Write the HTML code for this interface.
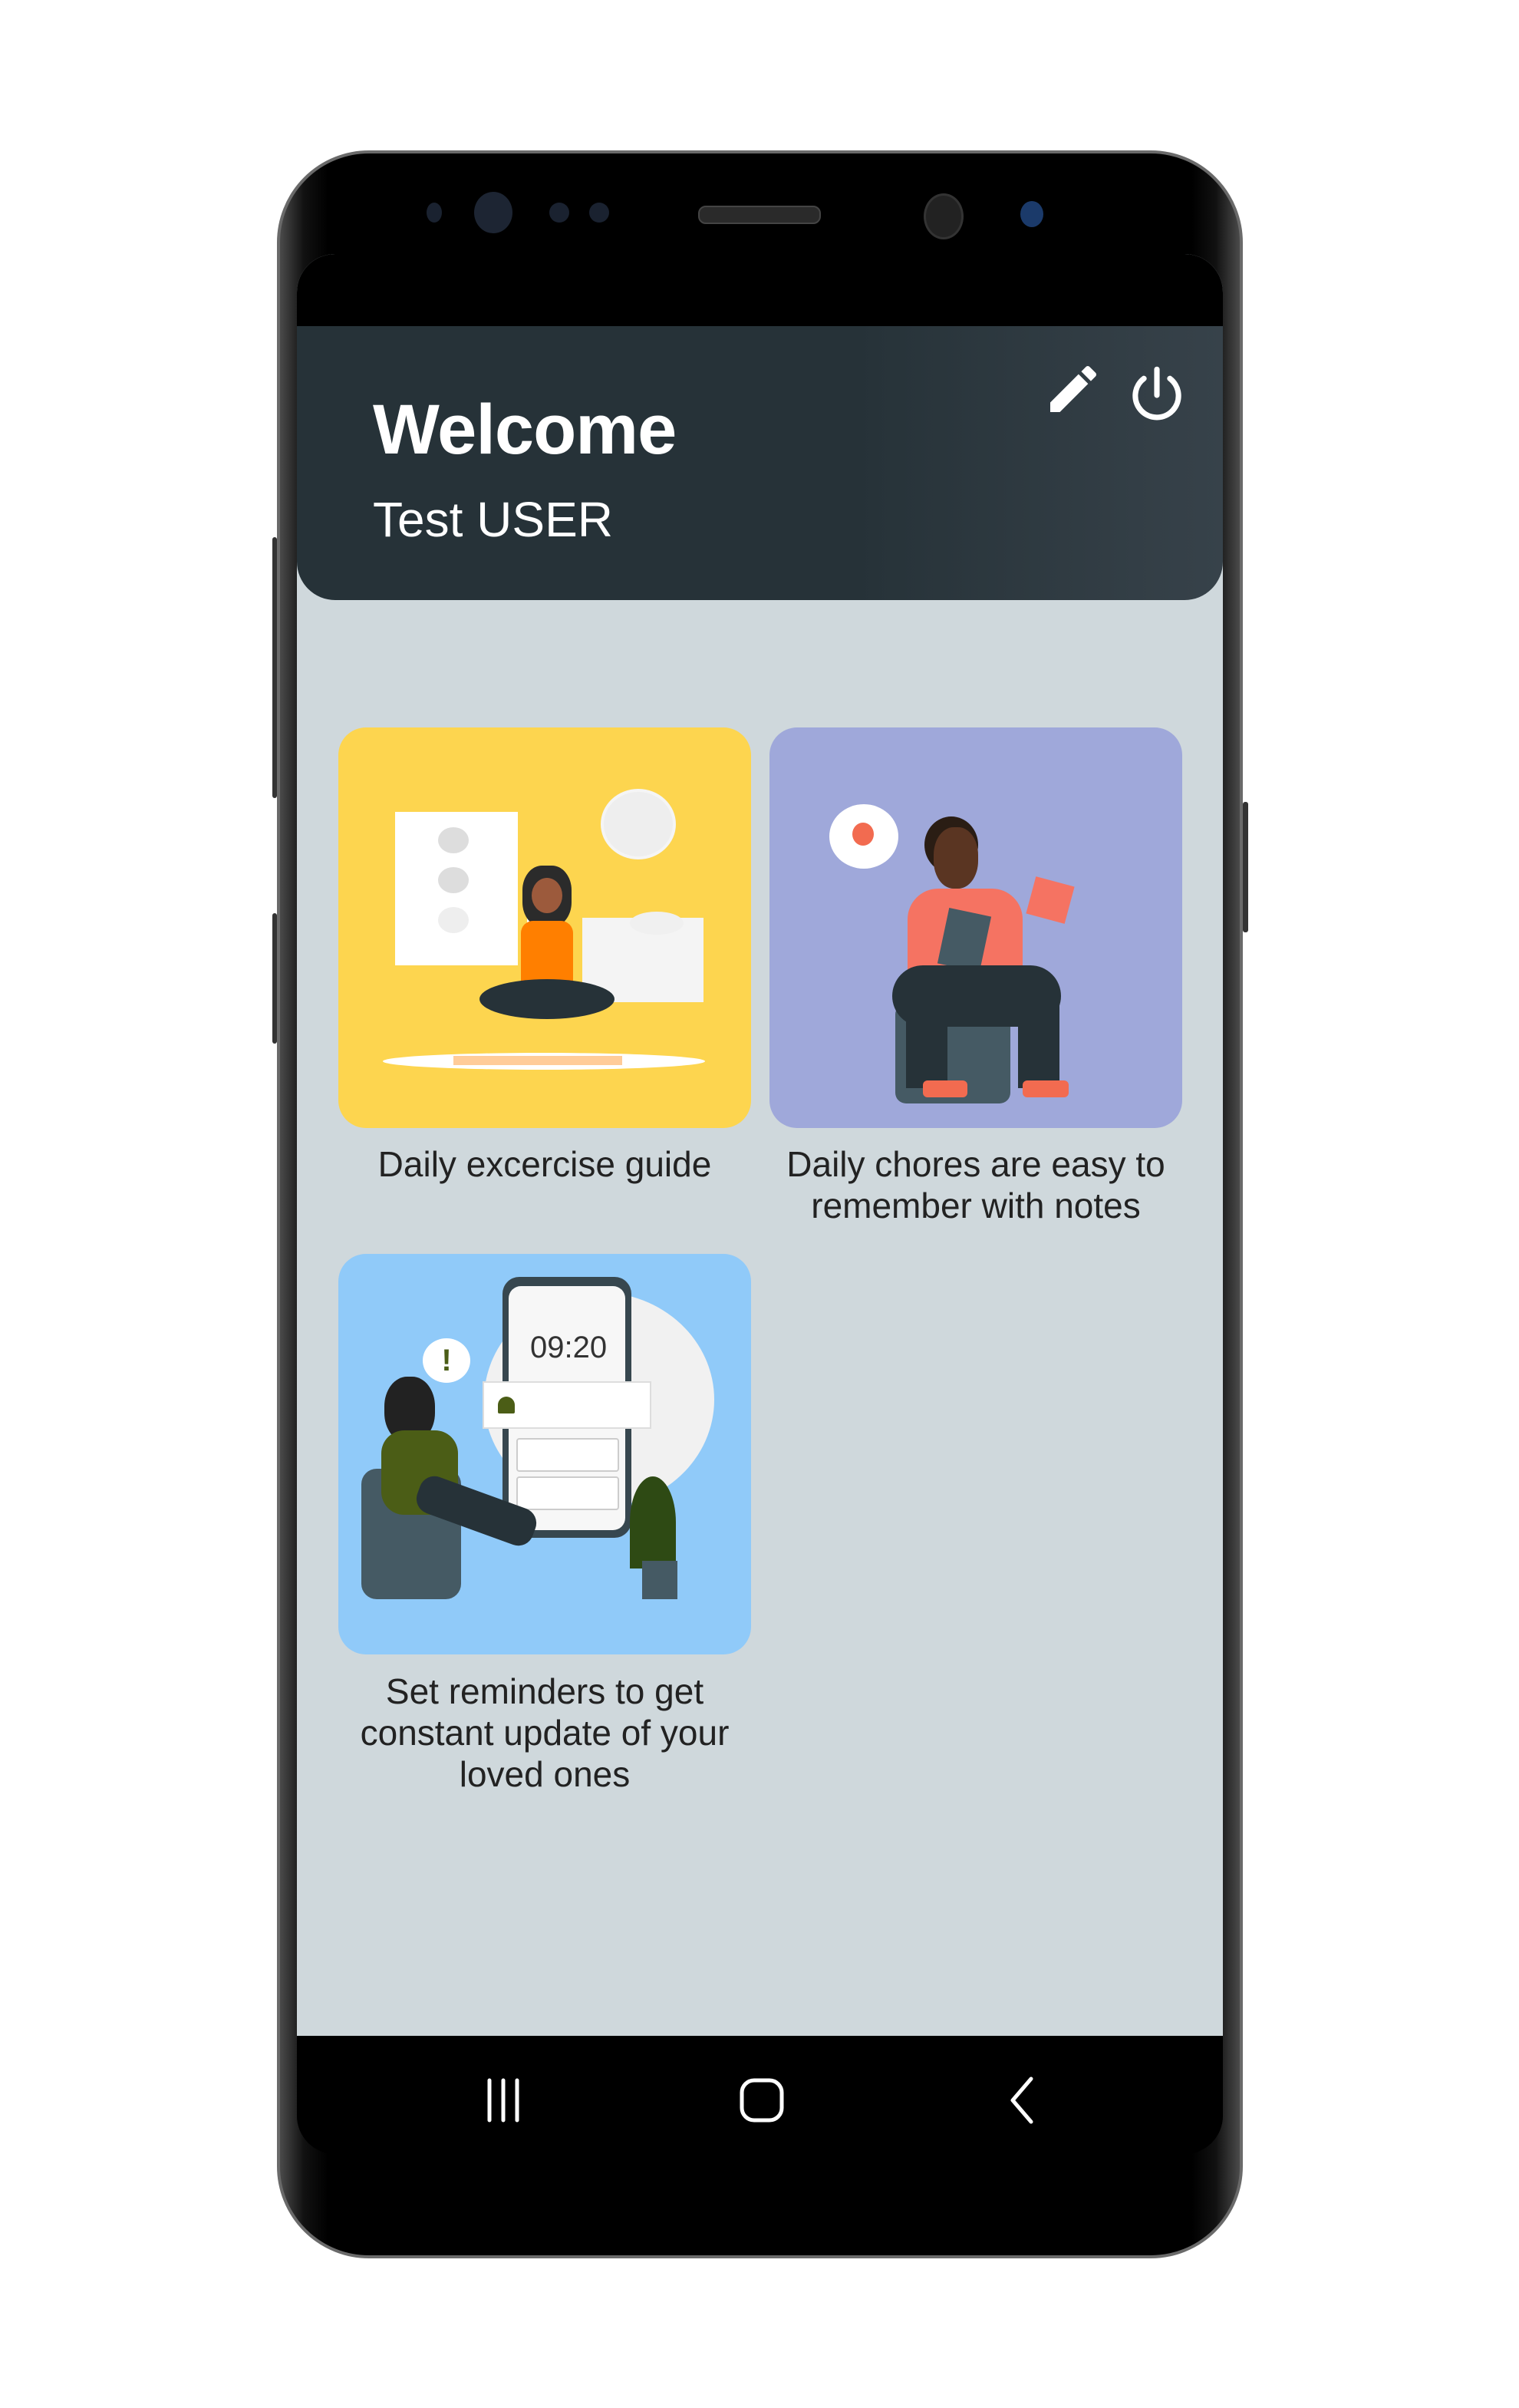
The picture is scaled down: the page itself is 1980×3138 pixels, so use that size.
<!DOCTYPE html>
<html><head><meta charset="utf-8"><style>
html,body{margin:0;padding:0;background:#fff;}
body{width:1980px;height:3138px;position:relative;overflow:hidden;font-family:"Liberation Sans",sans-serif;}
.abs{position:absolute;}
.phone{left:361px;top:196px;width:1259px;height:2747px;border-radius:120px;background:linear-gradient(90deg,#4a4a4a 0%,#111 2.5%,#000 5%,#000 95%,#111 97.5%,#4a4a4a 100%);border:4px solid #6a6a6a;box-sizing:border-box;}
.screen{left:387px;top:331px;width:1207px;height:2476px;border-radius:50px;background:#000;overflow:hidden;}
.header{left:0;top:94px;width:1207px;height:357px;background:linear-gradient(90deg,#263238 60%,#37424a 100%);border-radius:0 0 50px 50px;}
.body2{left:0;top:0;width:1207px;height:2322px;background:#cfd8dc;}
.card{position:absolute;width:538px;height:522px;border-radius:36px;overflow:hidden;}
.cap{position:absolute;width:560px;text-align:center;font-size:46px;line-height:54px;color:#222;}
</style></head><body>
<div class="abs phone"></div>
<div class="abs" style="left:355px;top:700px;width:6px;height:340px;background:#333;border-radius:3px"></div>
<div class="abs" style="left:355px;top:1190px;width:6px;height:170px;background:#333;border-radius:3px"></div>
<div class="abs" style="left:1620px;top:1045px;width:7px;height:170px;background:#333;border-radius:3px"></div>
<div class="abs" style="left:556px;top:264px;width:20px;height:26px;border-radius:50%;background:#1a2230"></div>
<div class="abs" style="left:618px;top:250px;width:50px;height:54px;border-radius:50%;background:#1d2533"></div>
<div class="abs" style="left:716px;top:264px;width:26px;height:26px;border-radius:50%;background:#1a2230"></div>
<div class="abs" style="left:768px;top:264px;width:26px;height:26px;border-radius:50%;background:#1a2230"></div>
<div class="abs" style="left:910px;top:268px;width:156px;height:20px;border-radius:10px;background:#2a2a2a;border:2px solid #444"></div>
<div class="abs" style="left:1204px;top:252px;width:46px;height:54px;border-radius:50%;background:#222;border:3px solid #333"></div>
<div class="abs" style="left:1330px;top:262px;width:30px;height:34px;border-radius:50%;background:#1b3a6a"></div>

<div class="abs screen">
  <div class="abs body2"></div>
  <div class="abs" style="left:0;top:0;width:1207px;height:94px;background:#000"></div>
  <div class="abs header">
    <div class="abs" style="left:99px;top:83px;font-size:92px;font-weight:bold;color:#fff;letter-spacing:-1px">Welcome</div>
    <div class="abs" style="left:99px;top:215px;font-size:64px;color:#fff">Test USER</div>
    <svg class="abs" style="left:972px;top:42px" width="80" height="80" viewBox="0 0 24 24"><path fill="#fff" d="M3 17.25V21h3.75L17.81 9.94l-3.75-3.75L3 17.25zM20.71 7.04a1 1 0 0 0 0-1.41l-2.34-2.34a1 1 0 0 0-1.41 0l-1.83 1.83 3.75 3.75 1.83-1.83z"/></svg>
    <svg class="abs" style="left:1076px;top:45px" width="90" height="90" viewBox="0 0 24 24"><path fill="none" stroke="#fff" stroke-width="1.9" stroke-linecap="round" d="M12 3v9M7.5 6.2A7.5 7.5 0 1 0 16.5 6.2"/></svg>
  </div>

  <div class="card" style="left:54px;top:617px;background:#fdd54f">
    <div class="abs" style="left:74px;top:110px;width:160px;height:200px;background:#fff"></div>
    <div class="abs" style="left:130px;top:130px;width:40px;height:34px;border-radius:50%;background:#ddd"></div>
    <div class="abs" style="left:130px;top:182px;width:40px;height:34px;border-radius:50%;background:#ddd"></div>
    <div class="abs" style="left:130px;top:234px;width:40px;height:34px;border-radius:50%;background:#eee"></div>
    <div class="abs" style="left:342px;top:80px;width:90px;height:84px;border-radius:50%;background:#eee;border:4px solid #f5f5f5"></div>
    <div class="abs" style="left:318px;top:248px;width:158px;height:110px;background:#f4f4f4"></div>
    <div class="abs" style="left:246px;top:210px;width:44px;height:70px;background:#fff"></div>
    <div class="abs" style="left:380px;top:240px;width:70px;height:30px;border-radius:50%;background:#f0f0f0"></div>
    <div class="abs" style="left:58px;top:424px;width:420px;height:22px;border-radius:50%;background:#fff"></div>
    <div class="abs" style="left:150px;top:428px;width:220px;height:12px;background:#ffcc99"></div>
    <div class="abs" style="left:240px;top:180px;width:64px;height:80px;border-radius:40%;background:#2b2b2b"></div>
    <div class="abs" style="left:252px;top:196px;width:40px;height:46px;border-radius:50%;background:#9c5a3c"></div>
    <div class="abs" style="left:238px;top:252px;width:68px;height:84px;border-radius:16px 16px 4px 4px;background:#ff7f00"></div>
    <div class="abs" style="left:184px;top:328px;width:176px;height:52px;border-radius:50%;background:#263238"></div>
  </div>
  <div class="cap" style="left:43px;top:1159px">Daily excercise guide</div>

  <div class="card" style="left:616px;top:617px;background:#9fa8da">
    <div class="abs" style="left:78px;top:100px;width:90px;height:84px;border-radius:50%;background:#fff"></div>
    <div class="abs" style="left:108px;top:124px;width:28px;height:30px;border-radius:50%;background:#f26b50"></div>
    <div class="abs" style="left:202px;top:116px;width:70px;height:74px;border-radius:50%;background:#2a1d14"></div>
    <div class="abs" style="left:214px;top:130px;width:58px;height:80px;border-radius:45%;background:#5a3522"></div>
    <div class="abs" style="left:180px;top:210px;width:150px;height:130px;border-radius:40px 40px 10px 10px;background:#f57362"></div>
    <div class="abs" style="left:226px;top:240px;width:56px;height:74px;background:#455a64;transform:rotate(12deg)"></div>
    <div class="abs" style="left:340px;top:200px;width:52px;height:50px;background:#f57362;transform:rotate(15deg)"></div>
    <div class="abs" style="left:164px;top:360px;width:150px;height:130px;background:#455a64;border-radius:14px"></div>
    <div class="abs" style="left:160px;top:310px;width:220px;height:80px;border-radius:40px;background:#263238"></div>
    <div class="abs" style="left:178px;top:340px;width:54px;height:130px;background:#263238"></div>
    <div class="abs" style="left:324px;top:340px;width:54px;height:130px;background:#263238"></div>
    <div class="abs" style="left:200px;top:460px;width:58px;height:22px;background:#f26b50;border-radius:6px"></div>
    <div class="abs" style="left:330px;top:460px;width:60px;height:22px;background:#f26b50;border-radius:6px"></div>
  </div>
  <div class="cap" style="left:605px;top:1159px">Daily chores are easy to<br>remember with notes</div>

  <div class="card" style="left:54px;top:1303px;background:#90caf9">
    <div class="abs" style="left:190px;top:50px;width:300px;height:280px;border-radius:50%;background:#f1f1f1"></div>
    <div class="abs" style="left:214px;top:30px;width:168px;height:340px;border-radius:22px;background:#37474f"></div>
    <div class="abs" style="left:222px;top:42px;width:152px;height:318px;border-radius:16px;background:#f7f7f7"></div>
    <div class="abs" style="left:250px;top:100px;font-size:40px;color:#333">09:20</div>
    <div class="abs" style="left:188px;top:166px;width:216px;height:58px;background:#fff;border:2px solid #ddd"></div>
    <div class="abs" style="left:208px;top:186px;width:22px;height:22px;border-radius:50% 50% 2px 2px;background:#4b5d16"></div>
    <div class="abs" style="left:232px;top:240px;width:130px;height:40px;background:#fff;border:2px solid #ccc;border-radius:4px"></div>
    <div class="abs" style="left:232px;top:290px;width:130px;height:40px;background:#fff;border:2px solid #ccc;border-radius:4px"></div>
    <div class="abs" style="left:110px;top:110px;width:62px;height:58px;border-radius:50%;background:#fff;font-size:40px;font-weight:bold;color:#4b5d16;text-align:center;line-height:58px">!</div>
    <div class="abs" style="left:30px;top:280px;width:130px;height:170px;border-radius:20px;background:#455a64"></div>
    <div class="abs" style="left:60px;top:160px;width:66px;height:86px;border-radius:45%;background:#222"></div>
    <div class="abs" style="left:56px;top:230px;width:100px;height:110px;border-radius:30px;background:#4b5d16"></div>
    <div class="abs" style="left:100px;top:310px;width:160px;height:50px;background:#263238;border-radius:20px;transform:rotate(20deg)"></div>
    <div class="abs" style="left:380px;top:290px;width:60px;height:120px;background:#2e4a14;border-radius:50% 50% 0 0"></div>
    <div class="abs" style="left:396px;top:400px;width:46px;height:50px;background:#455a64"></div>
  </div>
  <div class="cap" style="left:43px;top:1846px">Set reminders to get<br>constant update of your<br>loved ones</div>

  <div class="abs" style="left:0;top:2322px;width:1207px;height:154px;background:#000;border-radius:0 0 50px 50px"></div>
  <svg class="abs" style="left:239px;top:2376px" width="60" height="60" viewBox="0 0 60 60"><path d="M12 4v52M30 4v52M48 4v52" stroke="#fff" stroke-width="5" stroke-linecap="round"/></svg>
  <svg class="abs" style="left:574px;top:2374px" width="64" height="64" viewBox="0 0 64 64"><rect x="6" y="6" width="52" height="52" rx="16" fill="none" stroke="#fff" stroke-width="5"/></svg>
  <svg class="abs" style="left:919px;top:2374px" width="50" height="64" viewBox="0 0 50 64"><path d="M38 4L14 32l24 28" fill="none" stroke="#fff" stroke-width="5" stroke-linecap="round" stroke-linejoin="round"/></svg>
</div>
</body></html>
